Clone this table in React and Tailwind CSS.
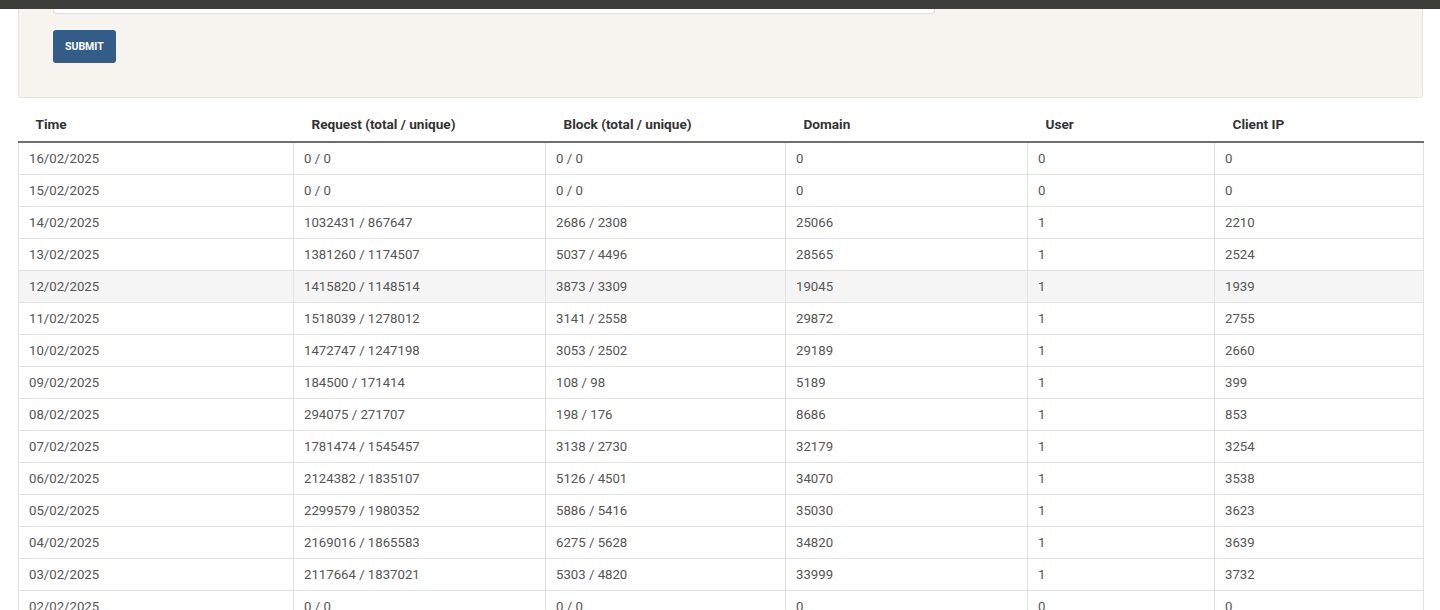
import React from 'react'

const rows = [
  ['16/02/2025', '0 / 0', '0 / 0', '0', '0', '0'],
  ['15/02/2025', '0 / 0', '0 / 0', '0', '0', '0'],
  ['14/02/2025', '1032431 / 867647', '2686 / 2308', '25066', '1', '2210'],
  ['13/02/2025', '1381260 / 1174507', '5037 / 4496', '28565', '1', '2524'],
  ['12/02/2025', '1415820 / 1148514', '3873 / 3309', '19045', '1', '1939'],
  ['11/02/2025', '1518039 / 1278012', '3141 / 2558', '29872', '1', '2755'],
  ['10/02/2025', '1472747 / 1247198', '3053 / 2502', '29189', '1', '2660'],
  ['09/02/2025', '184500 / 171414', '108 / 98', '5189', '1', '399'],
  ['08/02/2025', '294075 / 271707', '198 / 176', '8686', '1', '853'],
  ['07/02/2025', '1781474 / 1545457', '3138 / 2730', '32179', '1', '3254'],
  ['06/02/2025', '2124382 / 1835107', '5126 / 4501', '34070', '1', '3538'],
  ['05/02/2025', '2299579 / 1980352', '5886 / 5416', '35030', '1', '3623'],
  ['04/02/2025', '2169016 / 1865583', '6275 / 5628', '34820', '1', '3639'],
  ['03/02/2025', '2117664 / 1837021', '5303 / 4820', '33999', '1', '3732'],
  ['02/02/2025', '0 / 0', '0 / 0', '0', '0', '0'],
]

const headers = ['Time', 'Request (total / unique)', 'Block (total / unique)', 'Domain', 'User', 'Client IP']
const widths = ['w-[275px]', 'w-[252px]', 'w-[240px]', 'w-[242px]', 'w-[187px]', 'w-[209px]']

const App = () => {
  return (
    <div className="min-h-screen bg-white font-['Roboto',sans-serif] text-[13.2px]">
      {/* top bar */}
      <div className="h-[9px] bg-[#3d3d39]"></div>

      <div className="px-[18px] pr-[17px]">
        {/* filter panel */}
        <div className="bg-[#f7f4ef] border border-t-0 border-[#e8e4dc] rounded-b-[4px] pl-[34px] pb-[34px]">
          <div className="w-[882px] h-[5px] bg-white border border-t-0 border-[#dcdcdc] rounded-b-[4px]"></div>
          <button
            type="submit"
            className="mt-[16px] h-[33px] px-[12px] bg-[#335d88] text-white font-bold text-[10.5px] uppercase rounded-[3px]"
          >
            Submit
          </button>
        </div>

        {/* stats table */}
        <table className="mt-[10px] w-full table-fixed border-collapse text-left">
          <colgroup>
            {widths.map((w, i) => (
              <col key={i} className={w} />
            ))}
          </colgroup>
          <thead>
            <tr className="border-b-2 border-[#6f6f6f]">
              {headers.map((h, i) => (
                <th key={h} className={`h-[34px] font-bold text-[13.6px] text-[#333] ${i === 0 ? 'pl-[17px]' : 'pl-[18px]'}`}>
                  {h}
                </th>
              ))}
            </tr>
          </thead>
          <tbody>
            {rows.map((r, ri) => (
              <tr key={ri} className={ri === 4 ? 'bg-[#f5f5f5]' : 'bg-white'}>
                {r.map((c, ci) => (
                  <td key={ci} className="h-[32px] border border-[#e2e2e2] pl-[10px] text-[#555] leading-[15px]">
                    {c}
                  </td>
                ))}
              </tr>
            ))}
          </tbody>
        </table>
      </div>
    </div>
  )
}

export default App
